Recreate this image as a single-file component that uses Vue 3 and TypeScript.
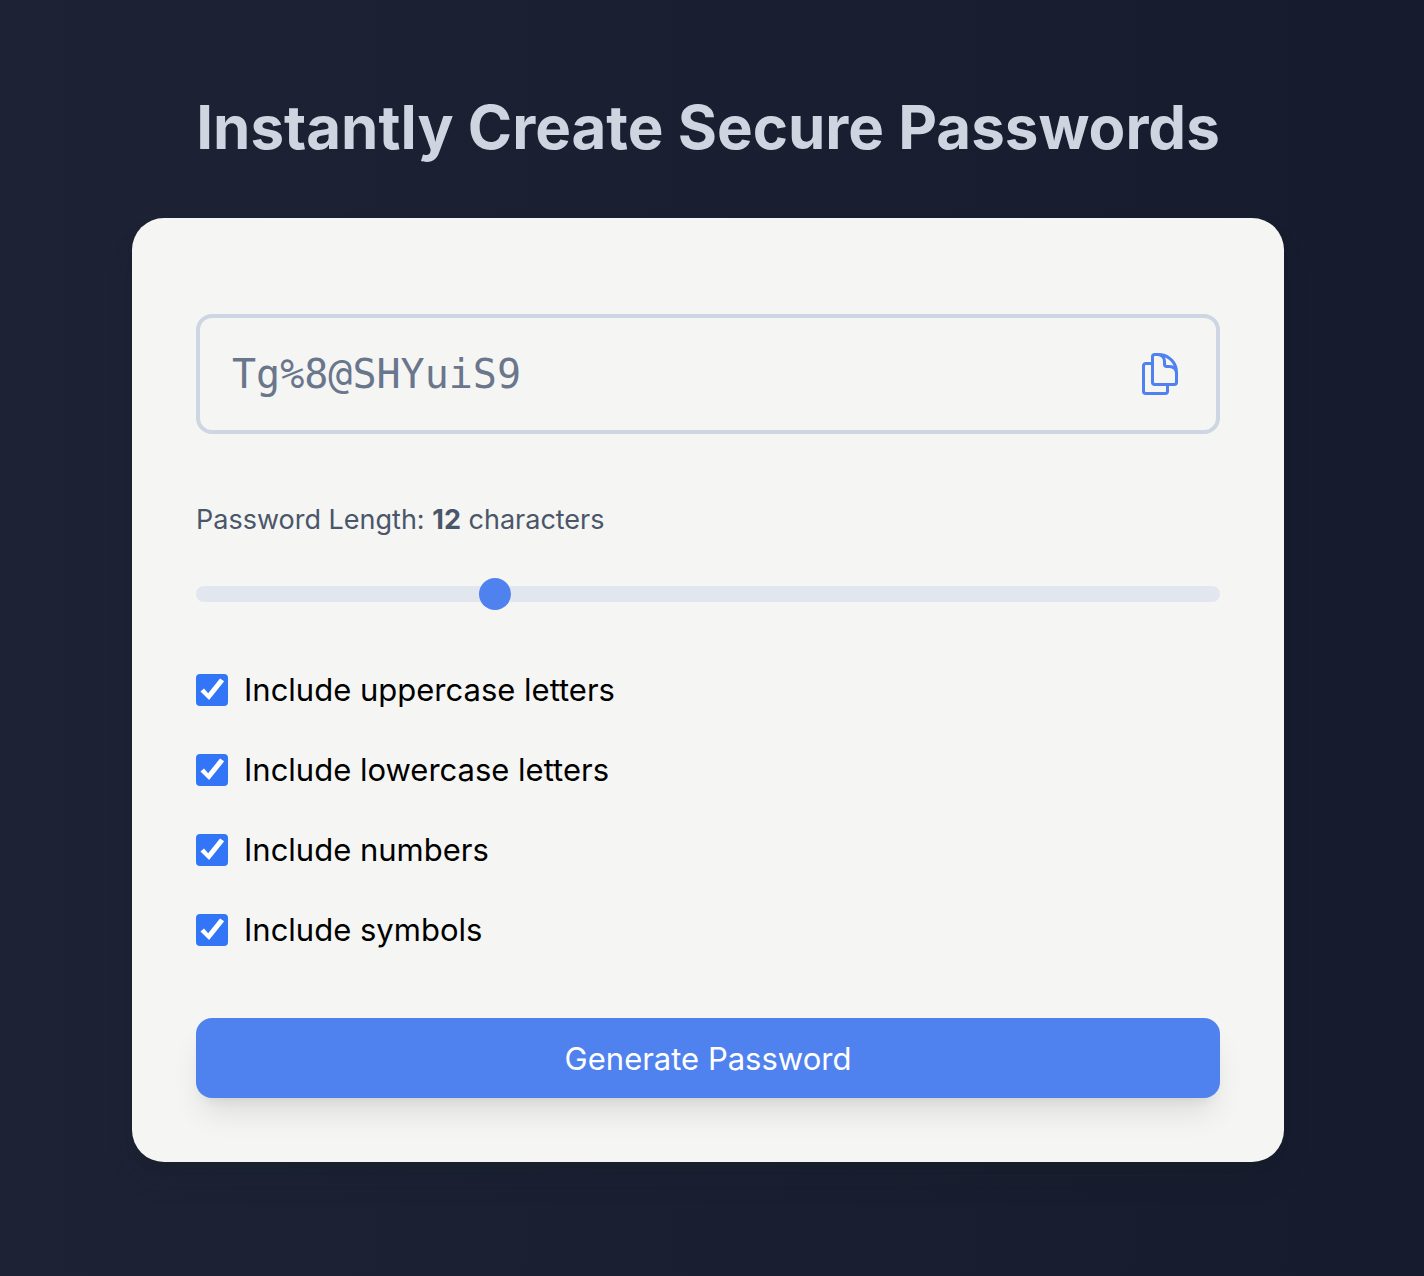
<script setup lang="ts">
import { reactive, ref } from 'vue'

interface CharacterSet {
  id: string
  label: string
  characters: string
  enabled: boolean
}

const password = ref('Tg%8@SHYuiS9')
const length = ref(12)
const sets = reactive<CharacterSet[]>([
  { id: 'uppercase', label: 'Include uppercase letters', characters: 'ABCDEFGHIJKLMNOPQRSTUVWXYZ', enabled: true },
  { id: 'lowercase', label: 'Include lowercase letters', characters: 'abcdefghijklmnopqrstuvwxyz', enabled: true },
  { id: 'numbers', label: 'Include numbers', characters: '0123456789', enabled: true },
  { id: 'symbols', label: 'Include symbols', characters: '!@#$%^&*()-_=+', enabled: true },
])

function generate(): void {
  const pool = sets.filter((set) => set.enabled).map((set) => set.characters).join('')
  if (!pool) {
    password.value = ''
    return
  }
  const values = crypto.getRandomValues(new Uint32Array(length.value))
  password.value = Array.from(values, (value) => pool[value % pool.length]).join('')
}

function copy(): void {
  navigator.clipboard?.writeText(password.value)
}
</script>

<template>
  <main class="page">
    <h1 class="title">Instantly Create Secure Passwords</h1>
    <form class="card" @submit.prevent="generate">
      <div class="result">
        <input v-model="password" class="result-text" type="text" aria-label="Generated password" readonly />
        <button class="copy" type="button" aria-label="Copy password" @click="copy">
          <svg viewBox="0 0 24 24" width="48" height="48" fill="none" stroke="currentColor" stroke-width="1.5" stroke-linecap="round" stroke-linejoin="round" aria-hidden="true">
            <path d="M15.75 17.25v3.375c0 .621-.504 1.125-1.125 1.125h-9.75a1.125 1.125 0 0 1-1.125-1.125V7.875c0-.621.504-1.125 1.125-1.125H8.25m7.5 10.5h3.375c.621 0 1.125-.504 1.125-1.125V11.25c0-4.46-3.243-8.161-7.5-8.876a9.06 9.06 0 0 0-1.5-.124H9.375c-.621 0-1.125.504-1.125 1.125v12.75c0 .621.504 1.125 1.125 1.125h6.375M20.25 13.5v-1.875a3.375 3.375 0 0 0-3.375-3.375h-1.5a1.125 1.125 0 0 1-1.125-1.125v-1.5a3.375 3.375 0 0 0-3.375-3.375H9.75" />
          </svg>
        </button>
      </div>

      <label class="length-label" for="length">Password Length: <strong>{{ length }}</strong> characters</label>
      <input id="length" v-model.number="length" class="slider" type="range" min="4" max="32" />

      <div class="options">
        <label v-for="set in sets" :key="set.id" class="option" :for="set.id">
          <input :id="set.id" v-model="set.enabled" class="checkbox" type="checkbox" />
          <span>{{ set.label }}</span>
        </label>
      </div>

      <button class="generate" type="submit">Generate Password</button>
    </form>
  </main>
</template>

<style>
body {
  background: #1a1f31;
}
</style>

<style scoped>
.page {
  box-sizing: border-box;
  min-height: 100vh;
  padding: 87px 40px 96px 32px;
  background: linear-gradient(to right, #1e2235, #161b2d);
  font-family: Inter, "Liberation Sans", sans-serif;
  color: #000;
}

.title {
  margin: 0 0 51px;
  font-size: 60px;
  line-height: 80px;
  font-weight: 700;
  text-align: center;
  color: #ced5e1;
}

.card {
  box-sizing: border-box;
  display: flex;
  flex-direction: column;
  max-width: 1152px;
  margin: 0 auto;
  padding: 96px 64px 64px;
  border-radius: 32px;
  background: #f5f5f3;
  box-shadow: 0 20px 30px -6px rgba(20, 40, 40, 0.2), 0 8px 12px -8px rgba(16, 32, 32, 0.4);
}

.result {
  display: flex;
  align-items: center;
  padding: 32px;
  border: 4px solid #cdd6e2;
  border-radius: 16px;
}

.result-text {
  flex: 1;
  min-width: 0;
  height: 48px;
  padding: 0;
  border: 0;
  outline: 0;
  background: transparent;
  font-family: "DejaVu Sans Mono", monospace;
  font-size: 40px;
  color: #69768c;
}

.copy {
  display: flex;
  padding: 0;
  border: 0;
  background: none;
  color: #4f82ee;
  cursor: pointer;
}

.length-label {
  margin-top: 64px;
  font-size: 27px;
  line-height: 44px;
  color: #4a5669;
}

.length-label strong {
  font-weight: 700;
}

.slider {
  appearance: none;
  width: 100%;
  height: 16px;
  margin: 44px 0 0;
  border-radius: 8px;
  background: #e2e7ef;
  cursor: pointer;
}

.slider::-webkit-slider-thumb {
  appearance: none;
  width: 32px;
  height: 32px;
  border-radius: 50%;
  background: #4f82ee;
}

.options {
  display: flex;
  flex-direction: column;
  gap: 32px;
  margin-top: 64px;
}

.option {
  display: flex;
  align-items: center;
  gap: 16px;
  font-size: 31px;
  line-height: 48px;
}

.checkbox {
  appearance: none;
  width: 32px;
  height: 32px;
  margin: 0;
  border: 2px solid #8a94a6;
  border-radius: 4px;
  background: #fff;
}

.checkbox:checked {
  border: 0;
  background: #3275f7;
}

.checkbox:checked::before {
  content: "";
  display: block;
  width: 32px;
  height: 32px;
  background: #fff;
  clip-path: polygon(14% 55%, 25% 45%, 38% 60%, 75% 14%, 88% 23%, 41% 81%);
}

.generate {
  height: 80px;
  margin-top: 64px;
  padding: 0 32px;
  border: 0;
  border-radius: 16px;
  background: #4f82ee;
  box-shadow: 0 20px 30px -6px rgba(0, 0, 0, 0.1), 0 8px 12px -8px rgba(0, 0, 0, 0.1);
  font-family: inherit;
  font-size: 31px;
  color: #fff;
  cursor: pointer;
}
</style>
